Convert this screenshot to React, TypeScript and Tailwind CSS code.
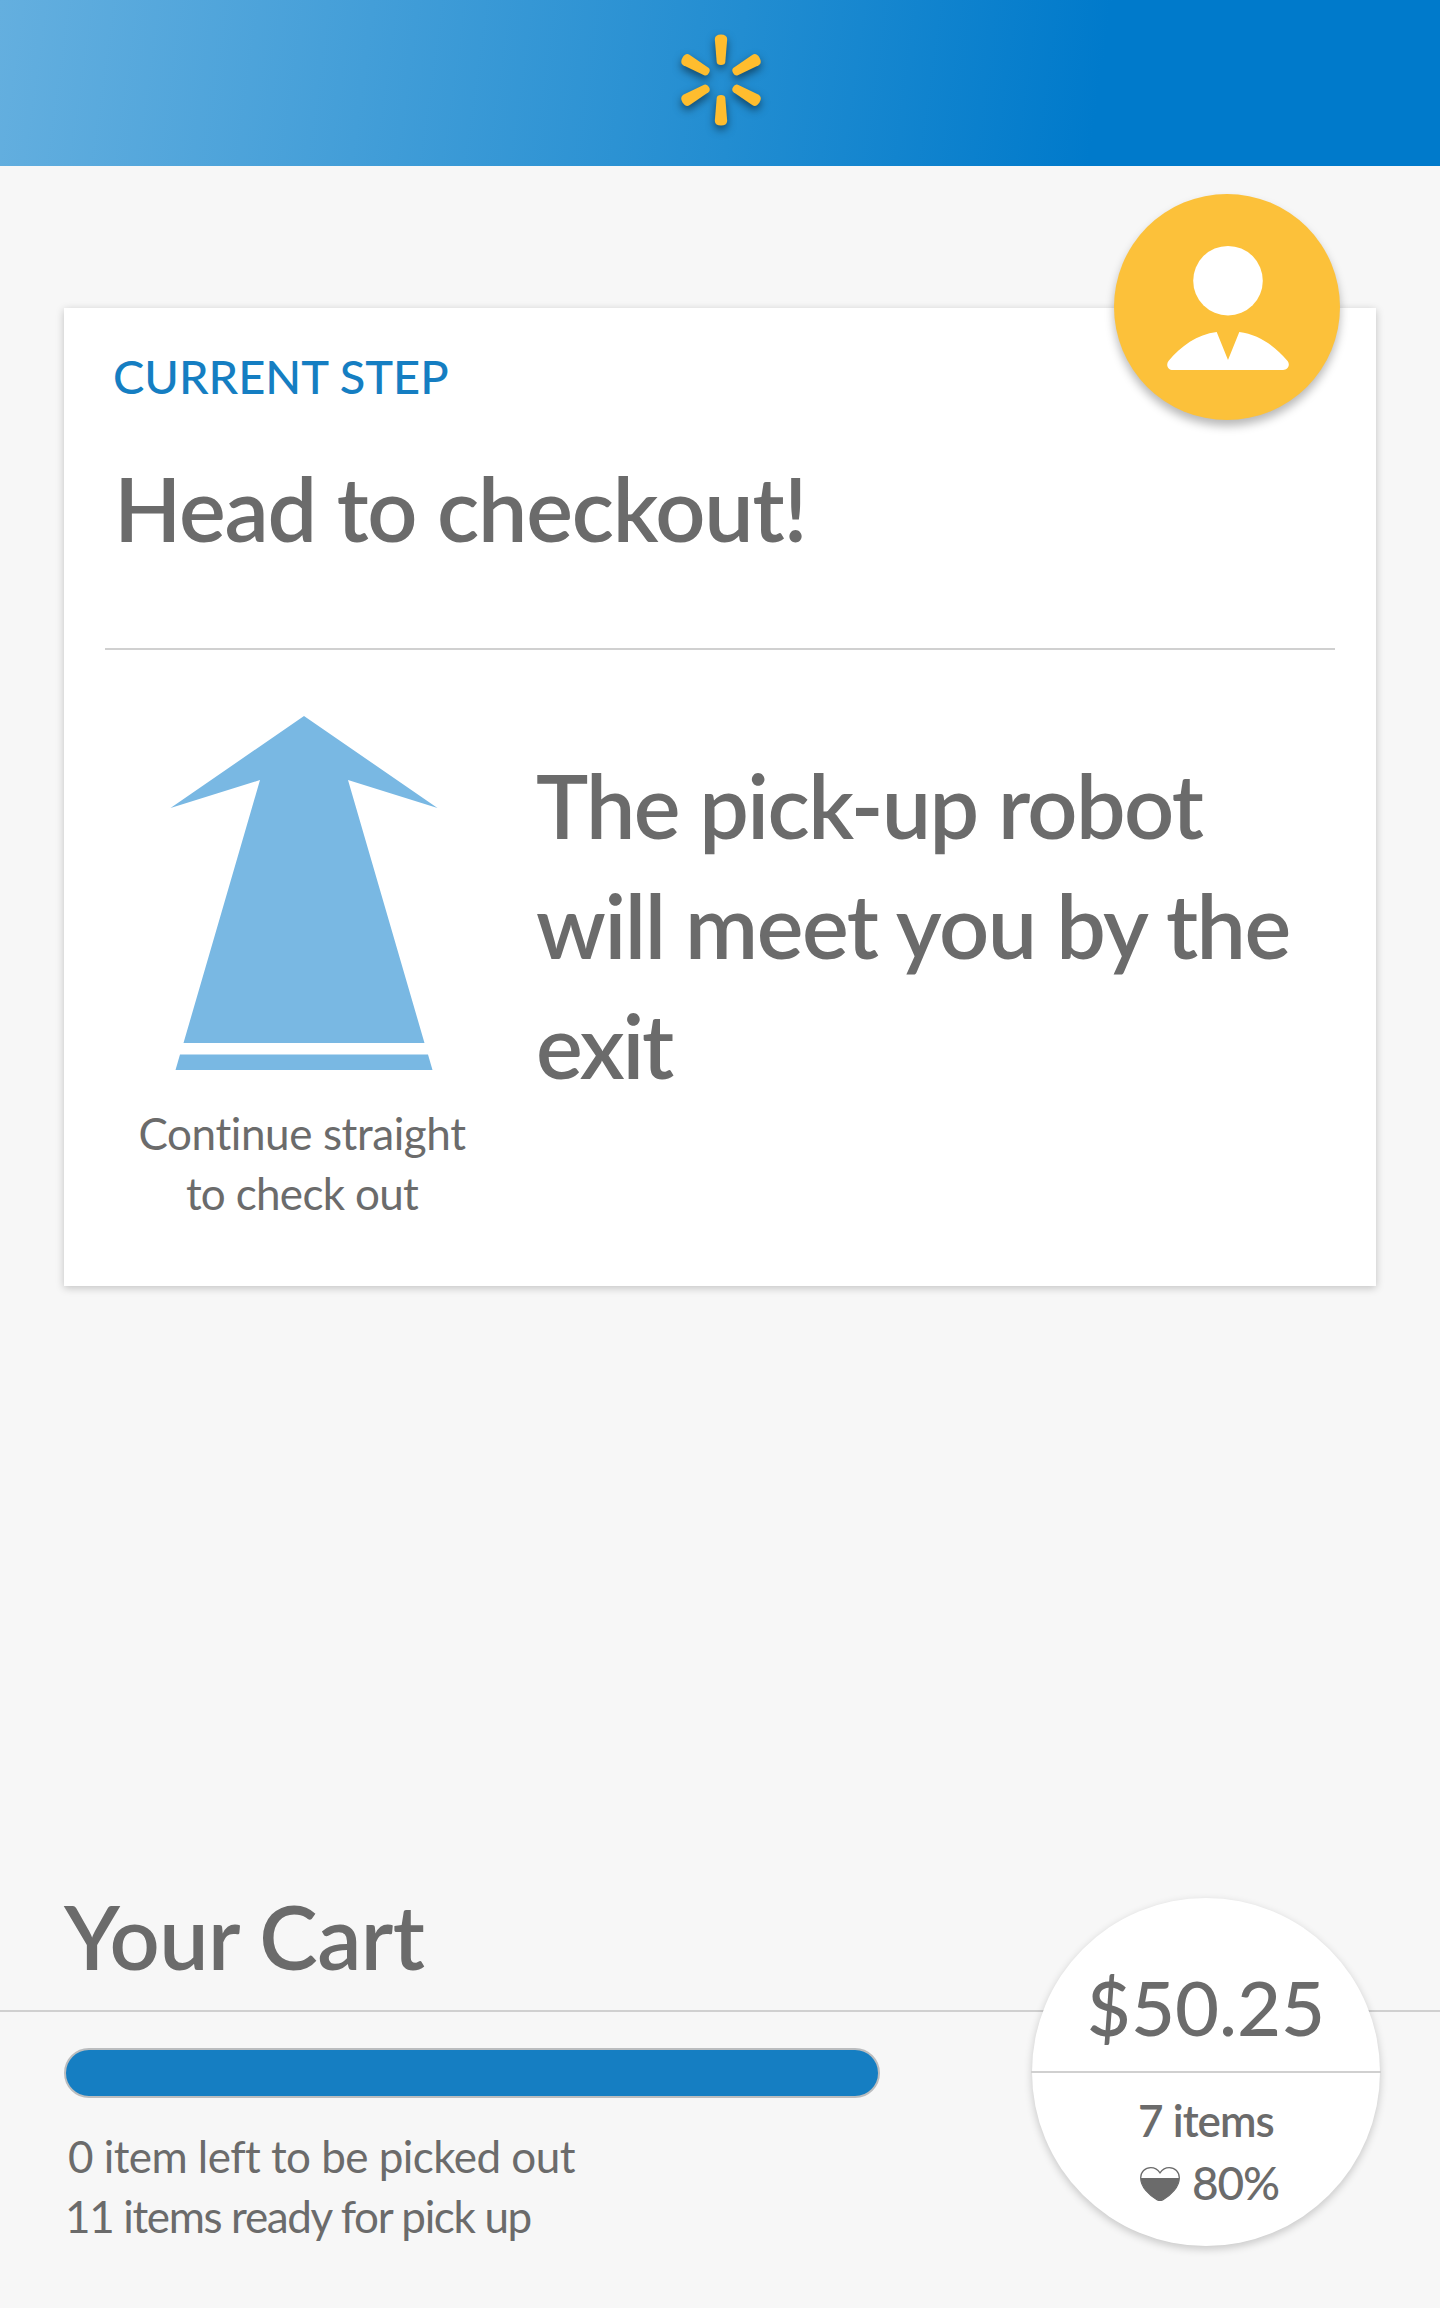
function Spark() {
  const ray =
    "M-6.2 -41 Q-5.8 -45.5 0 -45.5 Q5.8 -45.5 6.2 -41 L4.3 -18 Q4 -15 0 -15 Q-4 -15 -4.3 -18 Z";
  const sideRay =
    "M-6.2 -40 Q-5.8 -44.5 0 -44.5 Q5.8 -44.5 6.2 -40 L4.3 -17 Q4 -14 0 -14 Q-4 -14 -4.3 -17 Z";
  return (
    <svg
      className="ml-[2px] mb-[6px] h-[100px] w-[100px] overflow-visible drop-shadow-[0_4px_4px_rgba(0,0,0,0.5)]"
      viewBox="-50 -50 100 100"
      fill="#ffbd2e"
    >
      {[0, 60, 120, 180, 240, 300].map((angle) => (
        <path
          key={angle}
          d={angle % 180 === 0 ? ray : sideRay}
          transform={`rotate(${angle})`}
        />
      ))}
    </svg>
  );
}

function Avatar() {
  return (
    <div className="absolute -top-[114px] left-[1050px] h-[226px] w-[226px] rounded-full bg-[#fcc13a] shadow-[0_6px_10px_rgba(0,0,0,0.28)]">
      <svg className="h-full w-full" viewBox="0 0 226 226" fill="#fff">
        <circle cx="114" cy="86.7" r="34.8" />
        <path d="M102.7 138 C83 140.5 67 152 54.5 167 C51.5 171 54 176 59 176 H169 C174 176 176.5 171 173.6 167 C161 152 145 140.5 125.3 138 L114 166 Z" />
      </svg>
    </div>
  );
}

function StraightArrow() {
  return (
    <svg className="h-[354px] w-[268px]" viewBox="0 0 268 354" fill="#79b8e3">
      <path d="M134 0 L267.5 92 L178 64 L254.5 327 H13.5 L90 64 L0.5 92 Z" />
      <path d="M10 338.5 H258 L262.5 354 H5.5 Z" />
    </svg>
  );
}

function HealthHeart() {
  const outline =
    "M20 5.8 C17 1.6 13 .7 10.8 .7 C5 .7 .7 5 .7 10.8 C.7 20 9 28 17 32.7 Q20 34.3 23 32.7 C31 28 39.3 20 39.3 10.8 C39.3 5 35 .7 29.2 .7 C27 .7 23 1.6 20 5.8 Z";
  return (
    <svg className="mt-[2px] h-[34px] w-[40px]" viewBox="0 0 40 34">
      <clipPath id="heart-level">
        <rect x="0" y="11" width="40" height="23" />
      </clipPath>
      <path d={outline} fill="none" stroke="#6b6b6b" strokeWidth="1.3" />
      <path d={outline} fill="#6b6b6b" clipPath="url(#heart-level)" />
    </svg>
  );
}

function CurrentStepCard() {
  return (
    <section className="relative mx-16 mt-[142px] h-[978px] bg-white pt-10 shadow-[0_2px_8px_rgba(0,0,0,0.22)]">
      <Avatar />
      <p className="ml-[49px] text-[47px] leading-[56px] font-medium text-[#157ec2]">
        CURRENT STEP
      </p>
      <h1 className="mt-11 ml-[50px] text-[88px] leading-[120px] font-semibold tracking-[-1.2px]">
        Head to checkout!
      </h1>
      <hr className="mx-[41px] mt-20 border-0 border-t-2 border-[#d0d0d0]" />
      <div className="mx-[41px] flex">
        <div className="flex w-[398px] flex-col items-center pt-[66px]">
          <StraightArrow />
          <p className="mt-[33px] mr-[4px] text-center text-[44px] leading-[60px]">
            <span className="block tracking-[-0.4px]">Continue straight</span>
            <span className="block tracking-[-0.7px]">to check out</span>
          </p>
        </div>
        <p className="ml-[33px] pt-[95px] text-[88px] leading-[120px] font-semibold whitespace-nowrap">
          <span className="block tracking-[-1.6px]">The pick-up robot</span>
          <span className="block tracking-[-1.45px]">will meet you by the</span>
          <span className="block tracking-[-2.3px]">exit</span>
        </p>
      </div>
    </section>
  );
}

function CartTotal() {
  return (
    <div className="absolute top-[22px] left-[1032px] flex h-[348px] w-[348px] flex-col items-center rounded-full bg-white pt-[69px] font-medium shadow-[0_3px_8px_rgba(0,0,0,0.2)]">
      <p className="text-[76px] leading-[80px]">$50.25</p>
      <hr className="mt-6 w-[350px] border-0 border-t-2 border-[#d0d0d0]" />
      <p className="mt-[17px] text-[44px] leading-[60px] font-semibold tracking-[-0.95px]">
        7 items
      </p>
      <div className="mt-[3px] ml-[7px] flex items-center gap-3">
        <HealthHeart />
        <p className="text-[46px] leading-[60px] tracking-[-1.1px]">80%</p>
      </div>
    </div>
  );
}

function Cart() {
  return (
    <section className="relative mt-[590px]">
      <h2 className="ml-16 text-[88px] leading-[120px] font-semibold tracking-[-0.6px]">
        Your Cart
      </h2>
      <hr className="mt-[14px] border-0 border-t-2 border-[#d0d0d0]" />
      <div className="mt-9 ml-16 h-[50px] w-[816px] rounded-full border-2 border-[#bbbdbf] bg-[#157ec2]" />
      <p className="mt-[28px] ml-[68px] text-[44px] leading-[60px]">
        <span className="block tracking-[-0.55px]">0 item left to be picked out</span>
        <span className="-ml-[3px] block tracking-[-1.35px]">11 items ready for pick up</span>
      </p>
      <CartTotal />
    </section>
  );
}

export default function App() {
  return (
    <div className="h-[2308px] w-[1440px] overflow-hidden bg-[#f7f7f7] font-['Lato',sans-serif] text-[#6b6b6b]">
      <header className="flex h-[166px] items-center justify-center bg-[linear-gradient(98deg,#64afdf_0%,#228dd1_51%,#007acb_76%)]">
        <Spark />
      </header>
      <main className="flow-root">
        <CurrentStepCard />
        <Cart />
      </main>
    </div>
  );
}
